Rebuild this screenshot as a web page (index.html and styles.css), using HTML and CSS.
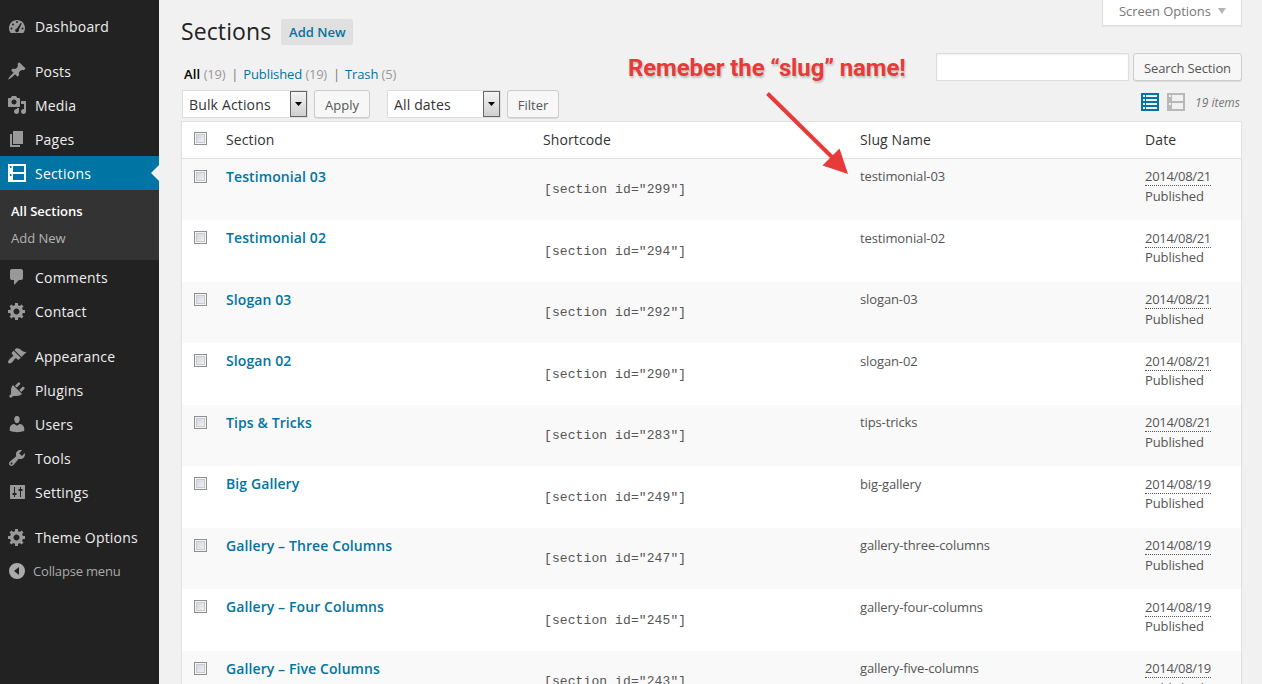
FILE: index.html
```html
<!DOCTYPE html>
<html lang="en">
<head>
<meta charset="utf-8">
<title>Sections</title>
<link rel="stylesheet" href="styles.css">
</head>
<body>
<div class="admin">
  <nav class="menu">
    <a class="item"><svg class="icon" viewBox="0 0 20 20"><path fill-rule="evenodd" d="M3.76 17h12.48c1.1-1.37 1.76-3.11 1.76-5 0-4.42-3.58-8-8-8s-8 3.58-8 8c0 1.89.66 3.63 1.76 5zM9 6a1 1 0 1 1 2 0a1 1 0 1 1-2 0zM5 8.500a1 1 0 1 1 2 0a1 1 0 1 1-2 0zM3.500 12.500a1 1 0 1 1 2 0a1 1 0 1 1-2 0zM14.500 12.500a1 1 0 1 1 2 0a1 1 0 1 1-2 0zM13.800 6.800l.9.700-2.800 6.300c.3 1-.2 2.100-1.400 2.400-1.300.2-2.400-.7-2.300-2 .1-1 .8-1.700 1.700-1.800z"/></svg><span>Dashboard</span></a>
    <a class="item gap"><svg class="icon" viewBox="0 0 20 20"><path d="M10.440 3.020l1.820-1.820 6.360 6.350-1.830 1.820c-1.050-.68-2.480-.57-3.410.36l-.75.75c-.92.93-1.040 2.350-.35 3.410l-1.830 1.820-2.410-2.410-2.800 2.790c-.42.42-3.380 2.710-3.800 2.290s1.860-3.390 2.280-3.810l2.790-2.790L4.100 9.360l1.830-1.820c1.050.69 2.480.57 3.400-.36l.75-.75c.93-.92 1.050-2.350.36-3.410z"/></svg><span>Posts</span></a>
    <a class="item"><svg class="icon" viewBox="0 0 20 20"><path d="M13 11V4c0-.55-.45-1-1-1h-1.670L9 1H5L3.670 3H2c-.55 0-1 .45-1 1v7c0 .55.45 1 1 1h10c.55 0 1-.45 1-1zM7 4.500c1.380 0 2.500 1.120 2.500 2.500S8.380 9.500 7 9.500 4.500 8.380 4.500 7 5.620 4.500 7 4.500zM14 6h5v10.500c0 1.380-1.120 2.500-2.500 2.500S14 17.880 14 16.500s1.120-2.500 2.500-2.500c.17 0 .34.02.5.05V9h-3V6zm-4 8.050V13h2v3.500c0 1.380-1.120 2.500-2.500 2.500S7 17.880 7 16.500 8.120 14 9.500 14c.17 0 .34.02.5.05z"/></svg><span>Media</span></a>
    <a class="item"><svg class="icon" viewBox="0 0 20 20"><path d="M6 15V2h10v13H6zm-1 1h8v2H3V5h2v11z"/></svg><span>Pages</span></a>
    <a class="item current"><svg class="icon" viewBox="0 0 20 20"><path fill-rule="evenodd" d="M1 1h18v18H1zM6 3v6h11V3zM6 11v6h11v-6zM3 3v2h1.500V3zM3 11v2h1.500v-2z"/></svg><span>Sections</span></a>
    <div class="submenu">
      <a class="active">All Sections</a>
      <a>Add New</a>
    </div>
    <a class="item"><svg class="icon" viewBox="0 0 20 20"><path d="M5 2h9c1.100 0 2 .9 2 2v7c0 1.100-.9 2-2 2h-2l-5 5v-5H5c-1.100 0-2-.9-2-2V4c0-1.100.9-2 2-2z"/></svg><span>Comments</span></a>
    <a class="item"><svg class="icon" viewBox="0 0 20 20"><path d="M18 12h-2.180c-.17.7-.44 1.350-.81 1.930l1.540 1.540-2.100 2.100-1.540-1.540c-.58.36-1.230.63-1.910.79V19H8v-2.180c-.68-.16-1.330-.43-1.910-.79l-1.540 1.540-2.120-2.120 1.540-1.540c-.36-.58-.63-1.230-.79-1.910H1V9.030h2.170c.16-.7.44-1.350.8-1.940L2.430 5.550l2.100-2.100 1.540 1.540c.58-.37 1.240-.64 1.930-.81V2h3v2.180c.68.16 1.330.43 1.910.79l1.540-1.540 2.120 2.120-1.540 1.540c.36.59.64 1.240.8 1.940H18V12zm-8.500 1.500c1.660 0 3-1.340 3-3s-1.340-3-3-3-3 1.340-3 3 1.340 3 3 3z"/></svg><span>Contact</span></a>
    <a class="item gap"><svg class="icon" viewBox="0 0 20 20"><path d="M14.480 11.060L7.410 3.990l1.500-1.500c.5-.56 2.300-.47 3.510.32 1.210.8 1.430 1.280 2.910 2.100 1.180.64 2.450 1.260 4.450.85zm-.71.71L6.700 4.700 4.930 6.470c-.39.39-.39 1.020 0 1.410l1.060 1.060c.39.39.39 1.030 0 1.420-.6.6-1.430 1.110-2.210 1.690-.35.26-.7.53-1.010.84C1.430 14.230.4 16.080 1.400 17.070c.99 1 2.840-.03 4.180-1.360.31-.31.58-.66.85-1.020.57-.78 1.080-1.610 1.690-2.210.39-.39 1.020-.39 1.410 0l1.060 1.060c.39.39 1.020.39 1.410 0z"/></svg><span>Appearance</span></a>
    <a class="item"><svg class="icon" viewBox="0 0 20 20"><path d="M13.110 4.360L9.870 7.600 8 5.730l3.240-3.240c.35-.34 1.050-.2 1.560.32.52.51.66 1.210.31 1.550zm-8 1.770l.91-1.120 9.010 9.010-1.190.84c-.71.71-2.630 1.160-3.820 1.160H6.140L4.900 17.260c-.59.59-1.540.59-2.120 0-.59-.58-.59-1.530 0-2.120l1.240-1.240v-3.880c0-1.130.4-3.190 1.090-3.890zm7.260 3.970l3.240-3.240c.34-.35 1.040-.21 1.550.31.52.51.66 1.210.31 1.550l-3.240 3.250z"/></svg><span>Plugins</span></a>
    <a class="item"><svg class="icon" viewBox="0 0 20 20"><path d="M10 9.250c-2.270 0-2.730-3.440-2.730-3.440C7 4.020 7.820 2 9.970 2c2.160 0 2.980 2.020 2.710 3.810 0 0-.41 3.440-2.680 3.440zm0 2.570L12.720 10c2.390 0 4.520 2.330 4.520 4.530v2.490s-3.650 1.130-7.240 1.130c-3.650 0-7.240-1.130-7.240-1.130v-2.490c0-2.250 1.940-4.480 4.470-4.480z"/></svg><span>Users</span></a>
    <a class="item"><svg class="icon" viewBox="0 0 20 20"><path d="M16.680 9.770c-1.340 1.340-3.300 1.670-4.950.99l-5.410 6.520c-.99.99-2.590.99-3.580 0s-.99-2.590 0-3.570l6.520-5.420c-.68-1.650-.35-3.610.99-4.950 1.280-1.280 3.120-1.620 4.720-1.060l-2.890 2.890 2.820 2.820 2.860-2.870c.53 1.580.18 3.390-1.080 4.650zM3.810 16.210c.4.39 1.040.39 1.430 0 .4-.4.4-1.040 0-1.430-.39-.4-1.030-.4-1.430 0-.39.39-.39 1.030 0 1.430z"/></svg><span>Tools</span></a>
    <a class="item"><svg class="icon" viewBox="0 0 20 20"><path fill-rule="evenodd" d="M18 16.500v-13c0-.3-.2-.5-.5-.5h-14c-.3 0-.5.200-.5.500v13c0 .3.200.5.500.5h14c.3 0 .5-.2.500-.5zM8 11h1.500v2H8v2H7v-2H5.500v-2H7V5h1zM14 9v6h-1V9h-1.500V7H13V5h1v2h1.500v2z"/></svg><span>Settings</span></a>
    <a class="item gap"><svg class="icon" viewBox="0 0 20 20"><path d="M18 12h-2.180c-.17.7-.44 1.350-.81 1.930l1.540 1.540-2.100 2.100-1.540-1.540c-.58.36-1.230.63-1.910.79V19H8v-2.180c-.68-.16-1.330-.43-1.910-.79l-1.540 1.540-2.120-2.120 1.540-1.540c-.36-.58-.63-1.230-.79-1.910H1V9.030h2.170c.16-.7.44-1.350.8-1.940L2.430 5.550l2.100-2.100 1.540 1.540c.58-.37 1.240-.64 1.930-.81V2h3v2.180c.68.16 1.330.43 1.910.79l1.540-1.540 2.120 2.120-1.540 1.540c.36.59.64 1.240.8 1.940H18V12zm-8.500 1.500c1.660 0 3-1.340 3-3s-1.340-3-3-3-3 1.340-3 3 1.340 3 3 3z"/></svg><span>Theme Options</span></a>
    <a class="item collapse"><svg class="icon" viewBox="0 0 20 20"><path fill-rule="evenodd" d="M10 2a8 8 0 1 0 0 16a8 8 0 1 0 0-16zM12 6v8l-5-4z"/></svg><span>Collapse menu</span></a>
  </nav>

  <main class="content">
    <header class="heading">
      <h1>Sections</h1>
      <a class="add-new">Add New</a>
      <a class="screen-options">Screen Options<span class="caret"></span></a>
    </header>

    <div class="filters">
      <ul class="views">
        <li><b>All</b> <i>(19)</i></li><li class="bar">|</li><li><a>Published</a> <i>(19)</i></li><li class="bar">|</li><li><a>Trash</a> <i>(5)</i></li>
      </ul>
      <div class="search"><input class="search-field" type="text" aria-label="Search"><a class="button search-button">Search Section</a></div>
    </div>

    <div class="toolbar">
      <div class="select bulk"><span>Bulk Actions</span><span class="drop"></span></div>
      <a class="button apply">Apply</a>
      <div class="select dates"><span>All dates</span><span class="drop"></span></div>
      <a class="button filter">Filter</a>
      <div class="modes">
        <svg class="mode on" viewBox="0 0 18 18"><path fill-rule="evenodd" d="M0 0h18v18H0zM2 2v2h2V2zM5 2v2h11V2zM2 6v2h2V6zM5 6v2h11V6zM2 10v2h2v-2zM5 10v2h11v-2zM2 14v2h2v-2zM5 14v2h11v-2z"/></svg>
        <svg class="mode" viewBox="0 0 18 18"><path fill-rule="evenodd" d="M0 0h18v18H0zM5 2v6h11V2zM5 10v6h11v-6zM2 2v2h2V2zM2 10v2h2v-2z"/></svg>
        <em>19 items</em>
      </div>
    </div>

    <section class="table">
      <div class="row head"><span class="box"></span><span>Section</span><span>Shortcode</span><span>Slug Name</span><span>Date</span></div>
      <div class="row"><span class="box"></span><a class="title">Testimonial 03</a><code>[section id="299"]</code><span class="slug">testimonial-03</span><span class="date"><abbr>2014/08/21</abbr><br>Published</span></div>
      <div class="row"><span class="box"></span><a class="title">Testimonial 02</a><code>[section id="294"]</code><span class="slug">testimonial-02</span><span class="date"><abbr>2014/08/21</abbr><br>Published</span></div>
      <div class="row"><span class="box"></span><a class="title">Slogan 03</a><code>[section id="292"]</code><span class="slug">slogan-03</span><span class="date"><abbr>2014/08/21</abbr><br>Published</span></div>
      <div class="row"><span class="box"></span><a class="title">Slogan 02</a><code>[section id="290"]</code><span class="slug">slogan-02</span><span class="date"><abbr>2014/08/21</abbr><br>Published</span></div>
      <div class="row"><span class="box"></span><a class="title">Tips &amp; Tricks</a><code>[section id="283"]</code><span class="slug">tips-tricks</span><span class="date"><abbr>2014/08/21</abbr><br>Published</span></div>
      <div class="row"><span class="box"></span><a class="title">Big Gallery</a><code>[section id="249"]</code><span class="slug">big-gallery</span><span class="date"><abbr>2014/08/19</abbr><br>Published</span></div>
      <div class="row"><span class="box"></span><a class="title">Gallery – Three Columns</a><code>[section id="247"]</code><span class="slug">gallery-three-columns</span><span class="date"><abbr>2014/08/19</abbr><br>Published</span></div>
      <div class="row"><span class="box"></span><a class="title">Gallery – Four Columns</a><code>[section id="245"]</code><span class="slug">gallery-four-columns</span><span class="date"><abbr>2014/08/19</abbr><br>Published</span></div>
      <div class="row"><span class="box"></span><a class="title">Gallery – Five Columns</a><code>[section id="243"]</code><span class="slug">gallery-five-columns</span><span class="date"><abbr>2014/08/19</abbr><br>Published</span></div>
    </section>
  </main>

  <div class="callout">Remeber the “slug” name!</div>
  <svg class="arrow" viewBox="0 0 90 90"><path d="M7.500 3.500L76 71" stroke="#e93a3a" stroke-width="4"/><path d="M88 84L79.500 58.500L62.500 75.500z" fill="#e93a3a"/></svg>
</div>
</body>
</html>
```

FILE: styles.css
```css
* { box-sizing: border-box; }
body {
  margin: 0;
  background: #f1f1f1;
  color: #555;
  font: 13px/19.5px "Open Sans", sans-serif;
}
.admin { position: relative; display: flex; width: 1262px; height: 684px; overflow: hidden; }

/* Side menu */
.menu { width: 159px; flex: none; background: #222; padding-top: 9px; }
.item { position: relative; display: flex; height: 34px; padding: 7px 0 0 7px; color: #eee; font-size: 14px; line-height: 20px; }
.item span { margin: 1px 0 0 8px; white-space: nowrap; letter-spacing: .2px; }
.icon { width: 20px; height: 20px; flex: none; fill: #999; }
.gap { margin-top: 11px; }
.current { background: #0074a2; color: #fff; }
.current .icon { fill: #fff; }
.current::after { content: ""; position: absolute; right: 0; top: 9px; border: 8px solid transparent; border-left: 0; border-right: 8px solid #f1f1f1; }
.submenu { display: flex; flex-direction: column; height: 70px; padding: 8px 11px; background: #333; font-size: 13px; line-height: 27px; color: #b4b4b4; }
.submenu .active { color: #fff; font-weight: 600; }
.collapse { color: #aaa; font-size: 13px; }
.collapse span { margin: 0 0 0 6px; letter-spacing: -.18px; }
.collapse .icon { fill: #aaa; }

/* Page header */
.content { flex: 1; min-width: 0; padding: 0 20px 0 22px; }
.heading { display: flex; height: 53px; }
h1 { margin: 0; font-size: 23px; font-weight: 400; line-height: 29px; padding-top: 17px; color: #222; letter-spacing: .1px; }
.add-new { align-self: flex-start; margin: 19px 0 0 10px; width: 72px; height: 26px; border-radius: 2px; background: #e0e0e0; color: #0074a2; font-weight: 600; line-height: 26px; text-align: center; }
.screen-options { display: flex; margin-left: auto; width: 140px; height: 26px; padding: 2px 0 0 16px; border: 1px solid #ddd; border-top: 0; background: #fff; color: #777; white-space: nowrap; box-shadow: 0 1px 1px rgba(0,0,0,.04); letter-spacing: -.05px; }
.caret { margin: 6px 0 0 7px; width: 8px; height: 6px; background: #b4b4b4; clip-path: polygon(0 0, 100% 0, 50% 100%); }

/* Views and search */
.filters { display: flex; justify-content: space-between; height: 37px; }
.views { display: flex; margin: 0; padding: 12px 0 0 3px; list-style: none; color: #0074a2; letter-spacing: -.1px; }
.views b { color: #000; font-weight: 600; letter-spacing: .2px; }
.views i { color: #999; font-style: normal; letter-spacing: -.25px; }
.views .bar { width: 18px; padding-left: 6px; color: #777; }
.search { display: flex; gap: 4px; }
.search-field { width: 193px; height: 28px; border: 1px solid #ddd; background: #fff; box-shadow: inset 0 1px 2px rgba(0,0,0,.07); }
.button { display: block; height: 28px; border: 1px solid #ccc; border-radius: 3px; background: #f7f7f7; color: #555; line-height: 28px; text-align: center; box-shadow: 0 1px 0 rgba(0,0,0,.08); white-space: nowrap; }
.search-button { width: 109px; letter-spacing: -.15px; }

/* Toolbar */
.toolbar { display: flex; height: 32px; padding-left: 1px; }
.select { display: flex; justify-content: space-between; height: 28px; border: 1px solid #ddd; background: #fff; padding-left: 6px; color: #333; font-size: 14px; line-height: 27px; letter-spacing: .15px; }
.bulk { width: 126px; }
.dates { width: 114px; margin-left: 17px; }
.drop { display: flex; width: 17px; height: 26px; border: 1px solid #666; background: linear-gradient(#f4f4f4, #cfcfcf); }
.drop::after { content: ""; margin: 10px 0 0 4px; width: 7px; height: 4px; background: #000; clip-path: polygon(0 0, 100% 0, 50% 100%); }
.apply { width: 56px; margin-left: 6px; }
.filter { width: 52px; margin-left: 6px; }
.modes { display: flex; margin-left: auto; padding: 3px 2px 0 0; }
.mode { width: 18px; height: 18px; margin-right: 8px; fill: #b8b8b8; }
.mode.on { fill: #0074a2; }
.modes em { margin-left: 2px; color: #777; font-size: 12px; }

/* Table */
.table { margin-top: -1px; border: 1px solid #e1e1e1; background: #fff; box-shadow: 0 1px 1px rgba(0,0,0,.04); }
.row { display: grid; grid-template-columns: 44px 317px 317px 285px 1fr; height: 61.5px; padding-top: 8px; align-items: start; }
.row:nth-child(even) { background: #f9f9f9; }
.head { height: 36.9px; padding-top: 8px; border-bottom: 1px solid #e1e1e1; color: #333; font-size: 14px; letter-spacing: .1px; }
.box { width: 13px; height: 13px; margin: 3px 0 0 12px; border: 1px solid #8e8f8f; background: linear-gradient(135deg, #cdd1d6, #f6f6f6); box-shadow: inset 0 0 0 1px #f4f4f4, inset 0 0 0 2px #c8ccd0; }
.head .box { margin-top: 2px; }
.title { color: #0074a2; font-size: 14px; font-weight: 600; letter-spacing: .1px; }
.slug { margin-top: .15px; letter-spacing: -.12px; }
code { margin-top: 13.15px; padding-left: 1px; font: 13px/19px "Liberation Mono", monospace; letter-spacing: .1px; }
.date { margin-top: .15px; letter-spacing: -.1px; }
.date abbr { border-bottom: 1px dotted #555; letter-spacing: -.3px; }

/* Annotation over the page */
.callout { position: absolute; left: 628px; top: 52px; color: #e93a3a; font: 700 24px/32px Roboto, sans-serif; white-space: nowrap; letter-spacing: -.12px; text-shadow: 1px 2px 2px rgba(0,0,0,.2); }
.arrow { position: absolute; left: 760px; top: 90px; width: 90px; height: 90px; fill: none; }
```
